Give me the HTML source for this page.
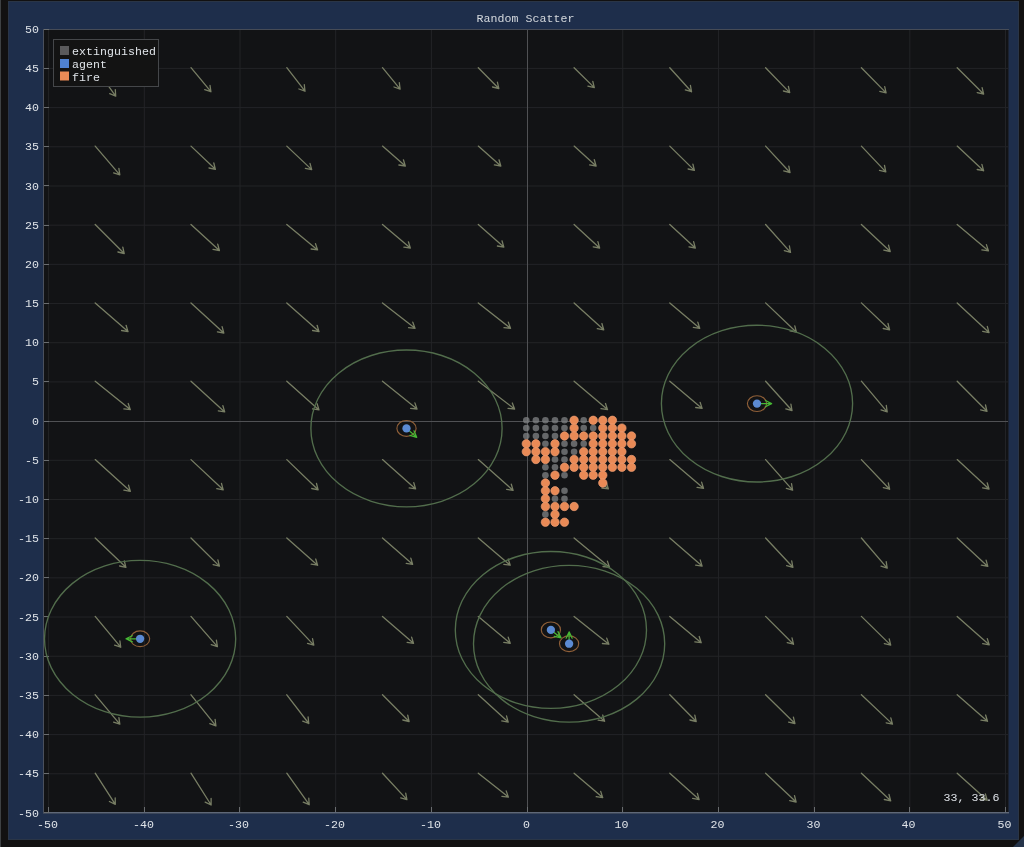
<!DOCTYPE html>
<html><head><meta charset="utf-8"><style>
html,body{margin:0;padding:0;background:#121111;width:1024px;height:847px;overflow:hidden}
svg{display:block;will-change:transform}
.t{font-family:"Liberation Mono",monospace;font-size:11.6px;letter-spacing:0.04px}
</style></head><body>
<svg width="1024" height="847" viewBox="0 0 1024 847" shape-rendering="auto">
<rect x="0" y="0" width="1024" height="847" fill="#121111"/>
<rect x="0" y="0" width="1" height="847" fill="#3e4143"/>
<rect x="8" y="1" width="1011" height="839" fill="#1e2e4b"/>
<rect x="8.5" y="1.5" width="1010" height="838" fill="none" stroke="#2a3546" stroke-width="1"/>
<text x="525.5" y="22" fill="#d4d8dd" text-anchor="middle" class="t">Random Scatter</text>
<rect x="43" y="29" width="966" height="784" fill="#121315"/>
<line x1="48.62" y1="30" x2="48.62" y2="812" stroke="#232427" stroke-width="1"/>
<line x1="144.31" y1="30" x2="144.31" y2="812" stroke="#232427" stroke-width="1"/>
<line x1="240.00" y1="30" x2="240.00" y2="812" stroke="#232427" stroke-width="1"/>
<line x1="335.69" y1="30" x2="335.69" y2="812" stroke="#232427" stroke-width="1"/>
<line x1="431.38" y1="30" x2="431.38" y2="812" stroke="#232427" stroke-width="1"/>
<line x1="622.76" y1="30" x2="622.76" y2="812" stroke="#232427" stroke-width="1"/>
<line x1="718.45" y1="30" x2="718.45" y2="812" stroke="#232427" stroke-width="1"/>
<line x1="814.14" y1="30" x2="814.14" y2="812" stroke="#232427" stroke-width="1"/>
<line x1="909.83" y1="30" x2="909.83" y2="812" stroke="#232427" stroke-width="1"/>
<line x1="1005.52" y1="30" x2="1005.52" y2="812" stroke="#232427" stroke-width="1"/>
<line x1="44" y1="773.79" x2="1008" y2="773.79" stroke="#232427" stroke-width="1"/>
<line x1="44" y1="734.60" x2="1008" y2="734.60" stroke="#232427" stroke-width="1"/>
<line x1="44" y1="695.41" x2="1008" y2="695.41" stroke="#232427" stroke-width="1"/>
<line x1="44" y1="656.23" x2="1008" y2="656.23" stroke="#232427" stroke-width="1"/>
<line x1="44" y1="617.04" x2="1008" y2="617.04" stroke="#232427" stroke-width="1"/>
<line x1="44" y1="577.85" x2="1008" y2="577.85" stroke="#232427" stroke-width="1"/>
<line x1="44" y1="538.66" x2="1008" y2="538.66" stroke="#232427" stroke-width="1"/>
<line x1="44" y1="499.48" x2="1008" y2="499.48" stroke="#232427" stroke-width="1"/>
<line x1="44" y1="460.29" x2="1008" y2="460.29" stroke="#232427" stroke-width="1"/>
<line x1="44" y1="381.91" x2="1008" y2="381.91" stroke="#232427" stroke-width="1"/>
<line x1="44" y1="342.73" x2="1008" y2="342.73" stroke="#232427" stroke-width="1"/>
<line x1="44" y1="303.54" x2="1008" y2="303.54" stroke="#232427" stroke-width="1"/>
<line x1="44" y1="264.35" x2="1008" y2="264.35" stroke="#232427" stroke-width="1"/>
<line x1="44" y1="225.16" x2="1008" y2="225.16" stroke="#232427" stroke-width="1"/>
<line x1="44" y1="185.98" x2="1008" y2="185.98" stroke="#232427" stroke-width="1"/>
<line x1="44" y1="146.79" x2="1008" y2="146.79" stroke="#232427" stroke-width="1"/>
<line x1="44" y1="107.60" x2="1008" y2="107.60" stroke="#232427" stroke-width="1"/>
<line x1="44" y1="68.41" x2="1008" y2="68.41" stroke="#232427" stroke-width="1"/>
<rect x="527" y="30" width="1" height="782" fill="#505154"/>
<rect x="44" y="421" width="964" height="1" fill="#505154"/>
<rect x="43" y="29" width="966" height="1" fill="#464b56"/>
<rect x="43" y="812" width="966" height="1" fill="#5f6878"/>
<rect x="43" y="813" width="966" height="1" fill="#3b4659"/>
<rect x="43" y="29" width="1" height="784" fill="#4a505d"/>
<rect x="1008" y="30" width="1" height="782" fill="#1b2230"/>
<rect x="44" y="812" width="5" height="1" fill="#6a6d70"/>
<rect x="44" y="773" width="5" height="1" fill="#6a6d70"/>
<rect x="44" y="734" width="5" height="1" fill="#6a6d70"/>
<rect x="44" y="695" width="5" height="1" fill="#6a6d70"/>
<rect x="44" y="656" width="5" height="1" fill="#6a6d70"/>
<rect x="44" y="616" width="5" height="1" fill="#6a6d70"/>
<rect x="44" y="577" width="5" height="1" fill="#6a6d70"/>
<rect x="44" y="538" width="5" height="1" fill="#6a6d70"/>
<rect x="44" y="499" width="5" height="1" fill="#6a6d70"/>
<rect x="44" y="460" width="5" height="1" fill="#6a6d70"/>
<rect x="44" y="421" width="5" height="1" fill="#6a6d70"/>
<rect x="44" y="381" width="5" height="1" fill="#6a6d70"/>
<rect x="44" y="342" width="5" height="1" fill="#6a6d70"/>
<rect x="44" y="303" width="5" height="1" fill="#6a6d70"/>
<rect x="44" y="264" width="5" height="1" fill="#6a6d70"/>
<rect x="44" y="225" width="5" height="1" fill="#6a6d70"/>
<rect x="44" y="185" width="5" height="1" fill="#6a6d70"/>
<rect x="44" y="146" width="5" height="1" fill="#6a6d70"/>
<rect x="44" y="107" width="5" height="1" fill="#6a6d70"/>
<rect x="44" y="68" width="5" height="1" fill="#6a6d70"/>
<rect x="44" y="29" width="5" height="1" fill="#6a6d70"/>
<rect x="48" y="807" width="1" height="5" fill="#6a6d70"/>
<rect x="144" y="807" width="1" height="5" fill="#6a6d70"/>
<rect x="239" y="807" width="1" height="5" fill="#6a6d70"/>
<rect x="335" y="807" width="1" height="5" fill="#6a6d70"/>
<rect x="431" y="807" width="1" height="5" fill="#6a6d70"/>
<rect x="527" y="807" width="1" height="5" fill="#6a6d70"/>
<rect x="622" y="807" width="1" height="5" fill="#6a6d70"/>
<rect x="718" y="807" width="1" height="5" fill="#6a6d70"/>
<rect x="814" y="807" width="1" height="5" fill="#6a6d70"/>
<rect x="909" y="807" width="1" height="5" fill="#6a6d70"/>
<rect x="1005" y="807" width="1" height="5" fill="#6a6d70"/>
<text x="39" y="816.5" fill="#dfe3e8" text-anchor="end" class="t">-50</text>
<text x="39" y="777.3" fill="#dfe3e8" text-anchor="end" class="t">-45</text>
<text x="39" y="738.1" fill="#dfe3e8" text-anchor="end" class="t">-40</text>
<text x="39" y="698.9" fill="#dfe3e8" text-anchor="end" class="t">-35</text>
<text x="39" y="659.7" fill="#dfe3e8" text-anchor="end" class="t">-30</text>
<text x="39" y="620.5" fill="#dfe3e8" text-anchor="end" class="t">-25</text>
<text x="39" y="581.4" fill="#dfe3e8" text-anchor="end" class="t">-20</text>
<text x="39" y="542.2" fill="#dfe3e8" text-anchor="end" class="t">-15</text>
<text x="39" y="503.0" fill="#dfe3e8" text-anchor="end" class="t">-10</text>
<text x="39" y="463.8" fill="#dfe3e8" text-anchor="end" class="t">-5</text>
<text x="39" y="424.6" fill="#dfe3e8" text-anchor="end" class="t">0</text>
<text x="39" y="385.4" fill="#dfe3e8" text-anchor="end" class="t">5</text>
<text x="39" y="346.2" fill="#dfe3e8" text-anchor="end" class="t">10</text>
<text x="39" y="307.0" fill="#dfe3e8" text-anchor="end" class="t">15</text>
<text x="39" y="267.9" fill="#dfe3e8" text-anchor="end" class="t">20</text>
<text x="39" y="228.7" fill="#dfe3e8" text-anchor="end" class="t">25</text>
<text x="39" y="189.5" fill="#dfe3e8" text-anchor="end" class="t">30</text>
<text x="39" y="150.3" fill="#dfe3e8" text-anchor="end" class="t">35</text>
<text x="39" y="111.1" fill="#dfe3e8" text-anchor="end" class="t">40</text>
<text x="39" y="71.9" fill="#dfe3e8" text-anchor="end" class="t">45</text>
<text x="39" y="32.7" fill="#dfe3e8" text-anchor="end" class="t">50</text>
<text x="47.6" y="828.3" fill="#dfe3e8" text-anchor="middle" class="t">-50</text>
<text x="143.6" y="828.3" fill="#dfe3e8" text-anchor="middle" class="t">-40</text>
<text x="238.6" y="828.3" fill="#dfe3e8" text-anchor="middle" class="t">-30</text>
<text x="334.6" y="828.3" fill="#dfe3e8" text-anchor="middle" class="t">-20</text>
<text x="430.6" y="828.3" fill="#dfe3e8" text-anchor="middle" class="t">-10</text>
<text x="526.6" y="828.3" fill="#dfe3e8" text-anchor="middle" class="t">0</text>
<text x="621.6" y="828.3" fill="#dfe3e8" text-anchor="middle" class="t">10</text>
<text x="717.6" y="828.3" fill="#dfe3e8" text-anchor="middle" class="t">20</text>
<text x="813.6" y="828.3" fill="#dfe3e8" text-anchor="middle" class="t">30</text>
<text x="908.6" y="828.3" fill="#dfe3e8" text-anchor="middle" class="t">40</text>
<text x="1004.6" y="828.3" fill="#dfe3e8" text-anchor="middle" class="t">50</text>
<path d="M95.2 67.7L115.7 96.1M115.3 89.6L115.7 96.1L109.7 93.7M191.0 67.7L210.9 91.7M210.0 85.3L210.9 91.7L204.7 89.7M286.8 67.7L305.0 91.2M304.3 84.7L305.0 91.2L298.9 89.0M382.5 67.7L400.1 89.1M399.3 82.7L400.1 89.1L394.0 87.0M478.3 67.7L498.8 88.5M497.4 82.2L498.8 88.5L492.5 87.0M574.1 67.7L594.3 87.6M592.8 81.3L594.3 87.6L587.9 86.2M669.8 67.7L691.5 91.7M690.4 85.3L691.5 91.7L685.3 89.9M765.6 67.7L789.7 92.6M788.4 86.3L789.7 92.6L783.4 91.0M861.4 67.7L886.1 92.9M884.7 86.6L886.1 92.9L879.8 91.4M957.2 67.7L983.6 94.0M982.1 87.7L983.6 94.0L977.2 92.6M95.2 146.1L119.8 174.8M118.9 168.4L119.8 174.8L113.6 172.9M191.0 146.1L215.4 169.3M213.8 163.0L215.4 169.3L209.0 168.0M286.8 146.1L311.7 169.6M310.0 163.3L311.7 169.6L305.3 168.3M382.5 146.1L405.3 166.0M403.4 159.8L405.3 166.0L398.9 165.0M478.3 146.1L500.8 166.0M499.0 159.8L500.8 166.0L494.4 164.9M574.1 146.1L596.1 166.0M594.3 159.7L596.1 166.0L589.7 164.9M669.8 146.1L694.4 170.4M692.9 164.1L694.4 170.4L688.1 169.0M765.6 146.1L790.0 172.5M788.8 166.1L790.0 172.5L783.7 170.8M861.4 146.1L885.8 171.9M884.5 165.5L885.8 171.9L879.5 170.3M957.2 146.1L983.6 170.7M981.9 164.4L983.6 170.7L977.2 169.5M95.2 224.5L124.2 253.5M122.8 247.1L124.2 253.5L117.9 252.0M191.0 224.5L219.4 250.5M217.7 244.2L219.4 250.5L213.0 249.3M286.8 224.5L317.6 249.9M315.5 243.7L317.6 249.9L311.1 249.0M382.5 224.5L410.3 248.0M408.4 241.8L410.3 248.0L403.9 247.1M478.3 224.5L503.8 247.1M502.0 240.8L503.8 247.1L497.4 246.0M574.1 224.5L599.6 248.0M597.9 241.7L599.6 248.0L593.2 246.8M669.8 224.5L695.3 248.0M693.6 241.7L695.3 248.0L689.0 246.8M765.6 224.5L790.5 252.4M789.4 246.0L790.5 252.4L784.3 250.6M861.4 224.5L890.2 251.5M888.5 245.2L890.2 251.5L883.8 250.2M957.2 224.5L988.4 250.8M986.4 244.6L988.4 250.8L981.9 249.9M95.2 302.9L128.0 331.6M126.1 325.3L128.0 331.6L121.6 330.5M191.0 302.9L223.8 333.0M222.1 326.7L223.8 333.0L217.4 331.8M286.8 302.9L319.0 331.6M317.1 325.3L319.0 331.6L312.6 330.5M382.5 302.9L415.0 328.3M412.8 322.2L415.0 328.3L408.6 327.6M478.3 302.9L510.5 328.3M508.3 322.1L510.5 328.3L504.0 327.6M574.1 302.9L603.7 329.8M601.9 323.5L603.7 329.8L597.3 328.6M669.8 302.9L699.7 328.3M697.8 322.1L699.7 328.3L693.3 327.3M765.6 302.9L796.4 332.2M794.8 325.9L796.4 332.2L790.0 330.9M861.4 302.9L889.6 329.8M888.0 323.5L889.6 329.8L883.2 328.5M957.2 302.9L989.0 332.6M987.3 326.3L989.0 332.6L982.6 331.3M95.2 381.2L130.3 409.6M128.2 403.5L130.3 409.6L123.9 408.9M191.0 381.2L224.7 411.9M222.9 405.7L224.7 411.9L218.3 410.8M286.8 381.2L319.0 409.9M317.1 403.7L319.0 409.9L312.6 408.9M382.5 381.2L417.0 409.0M414.9 402.9L417.0 409.0L410.6 408.3M478.3 381.2L514.6 409.0M512.3 403.0L514.6 409.0L508.1 408.4M574.1 381.2L607.5 409.6M605.5 403.5L607.5 409.6L601.0 408.7M669.8 381.2L702.1 408.4M700.1 402.3L702.1 408.4L695.7 407.5M765.6 381.2L792.0 410.5M790.9 404.1L792.0 410.5L785.8 408.8M861.4 381.2L887.2 411.9M886.3 405.5L887.2 411.9L881.0 409.9M957.2 381.2L987.0 411.3M985.5 405.0L987.0 411.3L980.6 409.9M95.2 459.6L130.3 491.3M128.5 485.1L130.3 491.3L123.9 490.2M191.0 459.6L223.2 489.8M221.5 483.5L223.2 489.8L216.8 488.6M286.8 459.6L318.1 489.8M316.5 483.5L318.1 489.8L311.7 488.5M382.5 459.6L415.6 488.9M413.8 482.7L415.6 488.9L409.2 487.9M478.3 459.6L513.1 490.4M511.3 484.2L513.1 490.4L506.7 489.4M601.5 483.1L608.4 488.9M606.4 482.7L608.4 488.9L601.9 488.0M669.8 459.6L703.5 488.3M701.6 482.1L703.5 488.3L697.1 487.4M765.6 459.6L792.6 490.1M791.5 483.7L792.6 490.1L786.4 488.3M861.4 459.6L889.6 489.2M888.3 482.9L889.6 489.2L883.3 487.6M957.2 459.6L989.0 489.0M987.2 482.8L989.0 489.0L982.6 487.8M95.2 538.0L125.9 567.3M124.3 561.0L125.9 567.3L119.6 566.0M191.0 538.0L219.4 566.1M217.9 559.8L219.4 566.1L213.1 564.7M286.8 538.0L317.6 565.2M315.7 559.0L317.6 565.2L311.2 564.1M382.5 538.0L412.6 564.3M410.8 558.1L412.6 564.3L406.2 563.3M478.3 538.0L510.2 565.2M508.2 559.0L510.2 565.2L503.8 564.3M574.1 538.0L609.5 567.3M607.4 561.1L609.5 567.3L603.0 566.5M669.8 538.0L702.1 566.1M700.2 559.9L702.1 566.1L695.7 565.1M765.6 538.0L792.9 567.3M791.7 560.9L792.9 567.3L786.6 565.6M861.4 538.0L887.2 568.1M886.2 561.7L887.2 568.1L881.0 566.2M957.2 538.0L987.8 566.4M986.1 560.1L987.8 566.4L981.4 565.2M95.2 616.4L120.7 647.2M119.9 640.8L120.7 647.2L114.6 645.2M191.0 616.4L217.4 646.6M216.4 640.2L217.4 646.6L211.2 644.7M286.8 616.4L313.8 645.1M312.5 638.7L313.8 645.1L307.5 643.4M382.5 616.4L413.5 643.3M411.6 637.1L413.5 643.3L407.1 642.3M478.3 616.4L510.2 643.3M508.2 637.1L510.2 643.3L503.8 642.4M574.1 616.4L608.9 644.2M606.7 638.1L608.9 644.2L602.4 643.5M669.8 616.4L701.2 642.7M699.2 636.5L701.2 642.7L694.8 641.8M765.6 616.4L793.5 644.2M792.0 637.9L793.5 644.2L787.2 642.7M861.4 616.4L890.7 645.1M889.2 638.8L890.7 645.1L884.3 643.7M957.2 616.4L989.2 644.8M987.3 638.6L989.2 644.8L982.7 643.7M95.2 694.8L119.8 724.1M118.9 717.6L119.8 724.1L113.6 722.1M191.0 694.8L215.9 725.9M215.1 719.4L215.9 725.9L209.8 723.7M286.8 694.8L308.8 723.5M308.1 717.0L308.8 723.5L302.7 721.2M382.5 694.8L409.1 721.5M407.7 715.1L409.1 721.5L402.8 720.0M478.3 694.8L508.2 722.1M506.5 715.8L508.2 722.1L501.8 720.9M574.1 694.8L604.6 721.2M602.7 715.0L604.6 721.2L598.2 720.2M669.8 694.8L696.2 721.5M694.8 715.1L696.2 721.5L689.9 720.0M765.6 694.8L794.9 723.5M793.4 717.2L794.9 723.5L788.6 722.1M861.4 694.8L892.5 724.1M890.8 717.8L892.5 724.1L886.1 722.8M957.2 694.8L987.5 721.2M985.6 715.0L987.5 721.2L981.0 720.2M95.2 773.2L115.3 804.3M115.2 797.8L115.3 804.3L109.4 801.5M191.0 773.2L211.1 805.0M211.1 798.5L211.1 805.0L205.2 802.1M286.8 773.2L309.2 804.7M308.8 798.2L309.2 804.7L303.2 802.2M382.5 773.2L406.9 799.6M405.7 793.2L406.9 799.6L400.7 797.9M478.3 773.2L508.4 797.1M506.2 790.9L508.4 797.1L501.9 796.3M574.1 773.2L602.7 797.6M600.7 791.4L602.7 797.6L596.2 796.6M669.8 773.2L699.1 799.6M697.4 793.3L699.1 799.6L692.7 798.4M765.6 773.2L796.1 802.0M794.5 795.7L796.1 802.0L789.7 800.7M861.4 773.2L890.7 800.8M889.0 794.5L890.7 800.8L884.3 799.5M957.2 773.2L987.2 800.2M985.4 793.9L987.2 800.2L980.7 799.0" fill="none" stroke="#787e64" stroke-width="1.3" stroke-linecap="round" stroke-linejoin="round"/>
<g fill="#828486" fill-opacity="0.75"><circle cx="526.3" cy="420.3" r="3.3"/><circle cx="535.9" cy="420.3" r="3.3"/><circle cx="545.4" cy="420.3" r="3.3"/><circle cx="555.0" cy="420.3" r="3.3"/><circle cx="564.5" cy="420.3" r="3.3"/><circle cx="583.7" cy="420.3" r="3.3"/><circle cx="526.3" cy="428.1" r="3.3"/><circle cx="535.9" cy="428.1" r="3.3"/><circle cx="545.4" cy="428.1" r="3.3"/><circle cx="555.0" cy="428.1" r="3.3"/><circle cx="564.5" cy="428.1" r="3.3"/><circle cx="583.7" cy="428.1" r="3.3"/><circle cx="593.2" cy="428.1" r="3.3"/><circle cx="526.3" cy="436.0" r="3.3"/><circle cx="535.9" cy="436.0" r="3.3"/><circle cx="545.4" cy="436.0" r="3.3"/><circle cx="555.0" cy="436.0" r="3.3"/><circle cx="545.4" cy="443.8" r="3.3"/><circle cx="564.5" cy="443.8" r="3.3"/><circle cx="574.1" cy="443.8" r="3.3"/><circle cx="583.7" cy="443.8" r="3.3"/><circle cx="564.5" cy="451.7" r="3.3"/><circle cx="574.1" cy="451.7" r="3.3"/><circle cx="555.0" cy="459.5" r="3.3"/><circle cx="564.5" cy="459.5" r="3.3"/><circle cx="545.4" cy="467.3" r="3.3"/><circle cx="555.0" cy="467.3" r="3.3"/><circle cx="545.4" cy="475.2" r="3.3"/><circle cx="564.5" cy="475.2" r="3.3"/><circle cx="564.5" cy="490.8" r="3.3"/><circle cx="555.0" cy="498.7" r="3.3"/><circle cx="564.5" cy="498.7" r="3.3"/><circle cx="545.4" cy="514.4" r="3.3"/></g>
<g fill="#e98a56" stroke="#ec9c72" stroke-width="0.7"><circle cx="574.1" cy="420.3" r="4.2"/><circle cx="593.2" cy="420.3" r="4.2"/><circle cx="602.8" cy="420.3" r="4.2"/><circle cx="612.4" cy="420.3" r="4.2"/><circle cx="574.1" cy="428.1" r="4.2"/><circle cx="602.8" cy="428.1" r="4.2"/><circle cx="612.4" cy="428.1" r="4.2"/><circle cx="621.9" cy="428.1" r="4.2"/><circle cx="564.5" cy="436.0" r="4.2"/><circle cx="574.1" cy="436.0" r="4.2"/><circle cx="583.7" cy="436.0" r="4.2"/><circle cx="593.2" cy="436.0" r="4.2"/><circle cx="602.8" cy="436.0" r="4.2"/><circle cx="612.4" cy="436.0" r="4.2"/><circle cx="621.9" cy="436.0" r="4.2"/><circle cx="631.5" cy="436.0" r="4.2"/><circle cx="526.3" cy="443.8" r="4.2"/><circle cx="535.9" cy="443.8" r="4.2"/><circle cx="555.0" cy="443.8" r="4.2"/><circle cx="593.2" cy="443.8" r="4.2"/><circle cx="602.8" cy="443.8" r="4.2"/><circle cx="612.4" cy="443.8" r="4.2"/><circle cx="621.9" cy="443.8" r="4.2"/><circle cx="631.5" cy="443.8" r="4.2"/><circle cx="526.3" cy="451.7" r="4.2"/><circle cx="535.9" cy="451.7" r="4.2"/><circle cx="545.4" cy="451.7" r="4.2"/><circle cx="555.0" cy="451.7" r="4.2"/><circle cx="583.7" cy="451.7" r="4.2"/><circle cx="593.2" cy="451.7" r="4.2"/><circle cx="602.8" cy="451.7" r="4.2"/><circle cx="612.4" cy="451.7" r="4.2"/><circle cx="621.9" cy="451.7" r="4.2"/><circle cx="535.9" cy="459.5" r="4.2"/><circle cx="545.4" cy="459.5" r="4.2"/><circle cx="574.1" cy="459.5" r="4.2"/><circle cx="583.7" cy="459.5" r="4.2"/><circle cx="593.2" cy="459.5" r="4.2"/><circle cx="602.8" cy="459.5" r="4.2"/><circle cx="612.4" cy="459.5" r="4.2"/><circle cx="621.9" cy="459.5" r="4.2"/><circle cx="631.5" cy="459.5" r="4.2"/><circle cx="564.5" cy="467.3" r="4.2"/><circle cx="574.1" cy="467.3" r="4.2"/><circle cx="583.7" cy="467.3" r="4.2"/><circle cx="593.2" cy="467.3" r="4.2"/><circle cx="602.8" cy="467.3" r="4.2"/><circle cx="612.4" cy="467.3" r="4.2"/><circle cx="621.9" cy="467.3" r="4.2"/><circle cx="631.5" cy="467.3" r="4.2"/><circle cx="555.0" cy="475.2" r="4.2"/><circle cx="583.7" cy="475.2" r="4.2"/><circle cx="593.2" cy="475.2" r="4.2"/><circle cx="602.8" cy="475.2" r="4.2"/><circle cx="545.4" cy="483.0" r="4.2"/><circle cx="602.8" cy="483.0" r="4.2"/><circle cx="545.4" cy="490.8" r="4.2"/><circle cx="555.0" cy="490.8" r="4.2"/><circle cx="545.4" cy="498.7" r="4.2"/><circle cx="545.4" cy="506.5" r="4.2"/><circle cx="555.0" cy="506.5" r="4.2"/><circle cx="564.5" cy="506.5" r="4.2"/><circle cx="574.1" cy="506.5" r="4.2"/><circle cx="555.0" cy="514.4" r="4.2"/><circle cx="545.4" cy="522.2" r="4.2"/><circle cx="555.0" cy="522.2" r="4.2"/><circle cx="564.5" cy="522.2" r="4.2"/></g>
<ellipse cx="406.5" cy="428.4" rx="95.6" ry="78.4" fill="none" stroke="#526d4c" stroke-width="1.35"/>
<ellipse cx="757.0" cy="403.6" rx="95.6" ry="78.4" fill="none" stroke="#526d4c" stroke-width="1.35"/>
<ellipse cx="140.1" cy="638.8" rx="95.6" ry="78.4" fill="none" stroke="#526d4c" stroke-width="1.35"/>
<ellipse cx="550.9" cy="629.9" rx="95.6" ry="78.4" fill="none" stroke="#526d4c" stroke-width="1.35"/>
<ellipse cx="569.1" cy="643.7" rx="95.6" ry="78.4" fill="none" stroke="#526d4c" stroke-width="1.35"/>
<ellipse cx="406.5" cy="428.4" rx="9.6" ry="7.9" fill="none" stroke="#8f5f38" stroke-width="1.15"/>
<path d="M406.5 428.4L416.7 437.3M414.0 430.8L416.7 437.3L409.9 435.4" fill="none" stroke="#46b834" stroke-width="1.25" stroke-linecap="round" stroke-linejoin="round"/>
<circle cx="406.5" cy="428.4" r="4.15" fill="#5b8ad2"/>
<ellipse cx="757.0" cy="403.6" rx="9.6" ry="7.9" fill="none" stroke="#8f5f38" stroke-width="1.15"/>
<path d="M757.0 403.6L771.6 403.6M765.4 400.5L771.6 403.6L765.4 406.7" fill="none" stroke="#46b834" stroke-width="1.25" stroke-linecap="round" stroke-linejoin="round"/>
<circle cx="757.0" cy="403.6" r="4.15" fill="#5b8ad2"/>
<ellipse cx="140.1" cy="638.8" rx="9.6" ry="7.9" fill="none" stroke="#8f5f38" stroke-width="1.15"/>
<path d="M140.1 638.8L126.0 638.8M132.3 641.9L126.0 638.8L132.3 635.7" fill="none" stroke="#46b834" stroke-width="1.25" stroke-linecap="round" stroke-linejoin="round"/>
<circle cx="140.1" cy="638.8" r="4.15" fill="#5b8ad2"/>
<ellipse cx="550.9" cy="629.9" rx="9.6" ry="7.9" fill="none" stroke="#8f5f38" stroke-width="1.15"/>
<path d="M550.9 629.9L561.1 637.9M558.0 631.6L561.1 637.9L554.2 636.4" fill="none" stroke="#46b834" stroke-width="1.25" stroke-linecap="round" stroke-linejoin="round"/>
<circle cx="550.9" cy="629.9" r="4.15" fill="#5b8ad2"/>
<ellipse cx="569.1" cy="643.7" rx="9.6" ry="7.9" fill="none" stroke="#8f5f38" stroke-width="1.15"/>
<path d="M569.1 643.7L569.1 631.9M566.1 638.2L569.1 631.9L572.2 638.2" fill="none" stroke="#46b834" stroke-width="1.25" stroke-linecap="round" stroke-linejoin="round"/>
<circle cx="569.1" cy="643.7" r="4.15" fill="#5b8ad2"/>
<rect x="53.5" y="39.5" width="105" height="47" fill="#131313" stroke="#45474a" stroke-width="1"/>
<rect x="60" y="46" width="9" height="9" fill="#5a5a5c"/>
<rect x="60" y="59" width="9" height="9" fill="#4f82d3"/>
<rect x="60" y="71.5" width="9" height="9" fill="#e98a56"/>
<text x="72" y="55" fill="#dfe3e8" class="t">extinguished</text>
<text x="72" y="68" fill="#dfe3e8" class="t">agent</text>
<text x="72" y="80.5" fill="#dfe3e8" class="t">fire</text>
<polygon points="1024,836 1024,847 1013,847" fill="#25344a"/>
<text x="999.5" y="800.7" fill="#dfe3e8" text-anchor="end" class="t">33, 33.6</text>
</svg>
</body></html>
